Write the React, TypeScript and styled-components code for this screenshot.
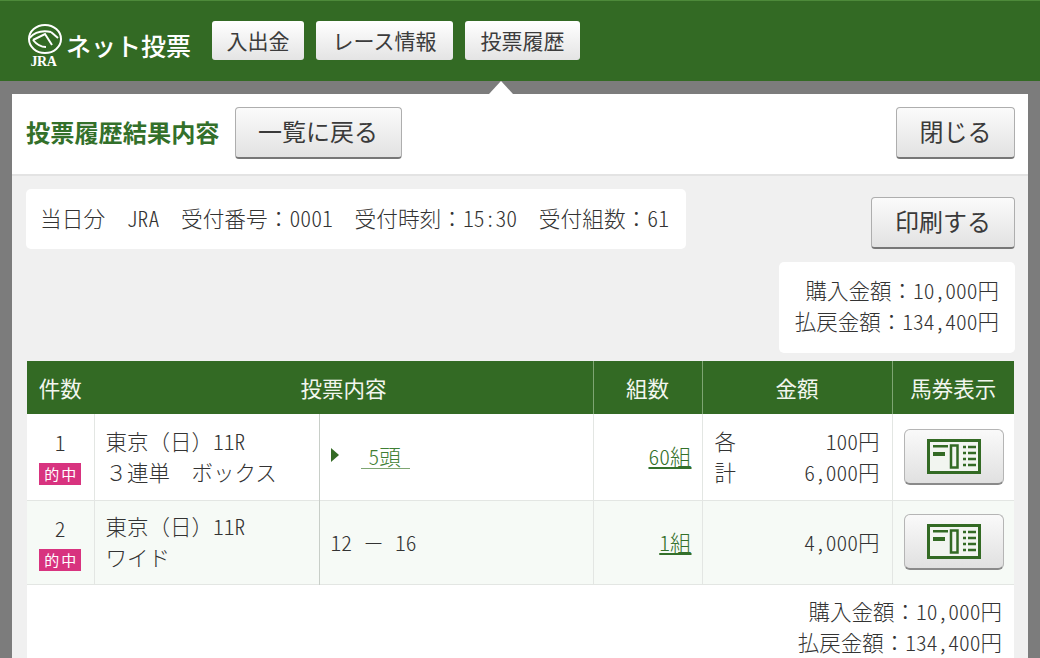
import React from "react";
import styled, { createGlobalStyle } from "styled-components";

const Global = createGlobalStyle`
  html, body { margin: 0; padding: 0; background: #7c7c7c; }
  body { width: 1040px; height: 658px; overflow: hidden; font-family: "Noto Sans CJK JP", "Liberation Sans", sans-serif; font-weight: 300; color: #333; }
  * { box-sizing: border-box; }
`;

const Page = styled.div`
  width: 1040px;
  height: 658px;
  overflow: hidden;
  background: #7c7c7c;
  display: flex;
  flex-direction: column;
`;
const Header = styled.header`
  height: 81px;
  flex: none;
  background: #336a24;
  border-top: 1px solid #4d8a3a;
  display: flex;
  align-items: flex-start;
  padding: 20px 0 0 27px;
`;
const Logo = styled.div`
  width: 163px;
  height: 46px;
  margin-right: 22px;
  display: flex;
  align-items: flex-start;
  color: #fff;
`;
const LogoMark = styled.div`
  width: 36px;
  display: flex;
  flex-direction: column;
  align-items: center;
  margin-top: 3px;
`;
const JraText = styled.span`
  font: bold 14px/11px "Liberation Serif", serif;
  letter-spacing: -0.4px;
  margin-top: 1px;
  margin-left: -3px;
`;
const LogoName = styled.span`
  font-size: 25px;
  font-weight: 500;
  line-height: 30px;
  margin-top: 9px;
  margin-left: 3px;
  white-space: nowrap;
`;
const NavList = styled.nav`
  display: flex;
  gap: 12px;
`;
const NavButton = styled.button`
  height: 39px;
  padding: 0;
  width: ${(p) => p.$w}px;
  font: 400 21px/37px "Noto Sans CJK JP", sans-serif;
  color: #3c3c3c;
  background: linear-gradient(#fff, #e4e4e4);
  border: 0;
  border-radius: 3px;
  white-space: nowrap;
`;
const Stage = styled.div`
  position: relative;
  flex: 1;
  padding: 13px 12px 0;
  min-height: 0;
`;
const Caret = styled.div`
  position: absolute;
  left: 489px;
  top: 0;
  width: 0;
  height: 0;
  border-left: 12px solid transparent;
  border-right: 12px solid transparent;
  border-bottom: 13px solid #fff;
`;
const Panel = styled.main`
  height: 100%;
  background: #f0f0f0;
  display: flex;
  flex-direction: column;
`;
const TitleBar = styled.div`
  height: 82px;
  flex: none;
  background: #fff;
  border-bottom: 2px solid #e3e3e3;
  display: flex;
  align-items: flex-start;
  padding: 13px 13px 0 14px;
`;
const Title = styled.h1`
  margin: 11px 15px 0 0;
  font-size: 24.2px;
  font-weight: 700;
  line-height: 28px;
  color: #33702a;
  white-space: nowrap;
`;
const ActionButton = styled.button`
  height: 52px;
  width: ${(p) => p.$w}px;
  padding: 0 0 4px;
  font: 400 24px/1 "Noto Sans CJK JP", sans-serif;
  color: #3a3a3a;
  background: linear-gradient(#fbfbfb, #e2e2e2);
  border: 1px solid #aeaeae;
  border-bottom: 2px solid #777;
  border-radius: 4px;
  white-space: nowrap;
`;
const Spacer = styled.div`
  flex: 1;
`;
const Info = styled.section`
  height: 185px;
  flex: none;
  display: grid;
  grid-template-columns: 1fr auto;
  padding: 13px 13px 0 14px;
`;
const Receipt = styled.div`
  width: 660px;
  height: 60px;
  background: #fff;
  border-radius: 5px;
  font-size: 21.7px;
  line-height: 58px;
  padding-left: 14px;
  white-space: pre;
`;
const Num = styled.span`
  font-feature-settings: "hwid";
`;
const InfoRight = styled.div`
  display: flex;
  flex-direction: column;
  align-items: flex-end;
  padding-top: 8px;
`;
const SumCard = styled.div`
  margin-top: 13px;
  width: 236px;
  height: 91px;
  background: #fff;
  border-radius: 5px;
  padding: 12px 16px 0 0;
  text-align: right;
  font-size: 21.5px;
  line-height: 31px;
  white-space: nowrap;
`;
const TableWrap = styled.div`
  margin: 0 14px 0 15px;
  background: #fff;
  flex: 1;
  min-height: 0;
`;
const Table = styled.table`
  width: 987px;
  border-collapse: collapse;
  table-layout: fixed;
  font-size: 21.5px;
`;
const Th = styled.th`
  height: 53px;
  padding: 0;
  background: #336a24;
  color: #f2f6ef;
  font-size: 21.5px;
  font-weight: 400;
  border-left: 1px solid ${(p) => (p.$plain ? "#336a24" : "#7ea572")};
  &:first-child { border-left: 0; }
`;
const Row = styled.tr`
  height: ${(p) => p.$h}px;
  background: ${(p) => (p.$alt ? "#f6faf6" : "#fff")};
  border-bottom: 1px solid #e3e6e3;
`;
const Td = styled.td`
  padding: 0 0 2px;
  line-height: 31px;
  border-left: 1px solid ${(p) => (p.$strong ? "#c8cec8" : "#e3e6e3")};
  white-space: pre;
  text-align: ${(p) => p.$align || "left"};
  &:first-child { border-left: 0; }
`;
const CountCell = styled(Td)`
  text-align: center;
  vertical-align: middle;
`;
const Hit = styled.span`
  display: block;
  width: 42px;
  height: 22px;
  margin: 6px auto 0;
  background: #d8337f;
  color: #fff;
  font-size: 15px;
  font-weight: 400;
  line-height: 21px;
  letter-spacing: 2px;
  padding-left: 2px;
  text-align: center;
`;
const RaceCell = styled(Td)`
  padding-left: 11px;
`;
const ContentCell = styled(Td)`
  padding-left: 11px;
`;
const Marker = styled.span`
  display: inline-block;
  width: 0;
  height: 0;
  margin-right: 22px;
  vertical-align: 3px;
  border-left: 8px solid #336a24;
  border-top: 7px solid transparent;
  border-bottom: 7px solid transparent;
`;
const HeadLink = styled.a`
  display: inline-block;
  line-height: 24px;
  padding: 0 9px 0 8px;
  color: #3f7f34;
  border-bottom: 1px solid #7ea572;
`;
const GreenLink = styled.a`
  color: #33702a;
  text-decoration: underline;
  text-underline-offset: 2px;
`;
const GroupCell = styled(Td)`
  text-align: right;
  padding-right: 10px;
`;
const AmountCell = styled(Td)`
  padding-left: 12px;
  padding-right: 12px;
`;
const AmountLine = styled.div`
  display: flex;
  justify-content: ${(p) => (p.$end ? "flex-end" : "space-between")};
`;
const TicketCell = styled(Td)`
  text-align: center;
  padding: 0 0 0 2px;
`;
const TicketButton = styled.button`
  display: inline-flex;
  align-items: center;
  justify-content: center;
  width: 100px;
  height: 56px;
  padding: 0;
  vertical-align: middle;
  background: linear-gradient(#fafafa, #e0e0e0);
  border: 1px solid #b5b5b5;
  border-bottom: 2px solid #8a8a8a;
  border-radius: 6px;
`;
const Totals = styled.div`
  padding: 10px 12px 0 0;
  text-align: right;
  font-size: 21.5px;
  line-height: 31px;
  white-space: nowrap;
`;

const JraMark = () => (
  <svg width="36" height="31" viewBox="0 0 36 31" fill="none" stroke="#fff" strokeWidth="2">
    <ellipse cx="18" cy="15" rx="16" ry="14" />
    <path d="M2.5 14 C7 9 14 6 24 8" />
    <path d="M6 16 L18 10 L25 21" />
    <path d="M6 16 C10 21 14 23 19 23" />
    <path d="M24 8 L31 14" />
  </svg>
);

const TicketIcon = () => (
  <svg width="54" height="35" viewBox="0 0 54 35">
    <rect x="1.5" y="1.5" width="51" height="32" fill="#f2f5f0" stroke="#336a24" strokeWidth="3" />
    <rect x="6" y="6" width="15" height="2.5" fill="#336a24" />
    <rect x="6" y="13" width="12" height="4" fill="#336a24" />
    <rect x="24" y="6.5" width="6.5" height="22" fill="none" stroke="#336a24" strokeWidth="2.5" />
    <path d="M36 8h3M36 14h3M36 20h3M36 26h3M41 8h8M41 14h8M41 20h8M41 26h8" stroke="#336a24" strokeWidth="2.5" />
  </svg>
);

export default function App() {
  return (
    <Page>
      <Global />
      <Header>
        <Logo>
          <LogoMark>
            <JraMark />
            <JraText>JRA</JraText>
          </LogoMark>
          <LogoName>ネット投票</LogoName>
        </Logo>
        <NavList>
          <NavButton $w={92}>入出金</NavButton>
          <NavButton $w={137}>レース情報</NavButton>
          <NavButton $w={115}>投票履歴</NavButton>
        </NavList>
      </Header>
      <Stage>
        <Caret />
        <Panel>
          <TitleBar>
            <Title>投票履歴結果内容</Title>
            <ActionButton $w={167}>一覧に戻る</ActionButton>
            <Spacer />
            <ActionButton $w={119}>閉じる</ActionButton>
          </TitleBar>
          <Info>
            <Receipt>
              当日分　<Num>JRA</Num>　受付番号：<Num>0001</Num>　受付時刻：<Num>15:30</Num>　受付組数：<Num>61</Num>
            </Receipt>
            <InfoRight>
              <ActionButton $w={144}>印刷する</ActionButton>
              <SumCard>
                購入金額：<Num>10,000</Num>円
                <br />
                払戻金額：<Num>134,400</Num>円
              </SumCard>
            </InfoRight>
          </Info>
          <TableWrap>
            <Table>
              <colgroup>
                <col style={{ width: 67 }} />
                <col style={{ width: 225 }} />
                <col style={{ width: 274 }} />
                <col style={{ width: 109 }} />
                <col style={{ width: 190 }} />
                <col style={{ width: 122 }} />
              </colgroup>
              <thead>
                <tr>
                  <Th>件数</Th>
                  <Th colSpan={2} $plain>投票内容</Th>
                  <Th>組数</Th>
                  <Th>金額</Th>
                  <Th>馬券表示</Th>
                </tr>
              </thead>
              <tbody>
                <Row $h={86}>
                  <CountCell>
                    <Num>1</Num>
                    <Hit>的中</Hit>
                  </CountCell>
                  <RaceCell>
                    東京（日）<Num>11R</Num>
                    <br />
                    ３連単　ボックス
                  </RaceCell>
                  <ContentCell $strong>
                    <Marker />
                    <HeadLink>
                      <Num>5</Num>頭
                    </HeadLink>
                  </ContentCell>
                  <GroupCell>
                    <GreenLink>
                      <Num>60</Num>組
                    </GreenLink>
                  </GroupCell>
                  <AmountCell>
                    <AmountLine>
                      <span>各</span>
                      <span>
                        <Num>100</Num>円
                      </span>
                    </AmountLine>
                    <AmountLine>
                      <span>計</span>
                      <span>
                        <Num>6,000</Num>円
                      </span>
                    </AmountLine>
                  </AmountCell>
                  <TicketCell>
                    <TicketButton aria-label="馬券表示">
                      <TicketIcon />
                    </TicketButton>
                  </TicketCell>
                </Row>
                <Row $h={84} $alt>
                  <CountCell>
                    <Num>2</Num>
                    <Hit>的中</Hit>
                  </CountCell>
                  <RaceCell>
                    東京（日）<Num>11R</Num>
                    <br />
                    ワイド
                  </RaceCell>
                  <ContentCell $strong>
                    <Num>{"12 "}</Num>－<Num>{" 16"}</Num>
                  </ContentCell>
                  <GroupCell>
                    <GreenLink>
                      <Num>1</Num>組
                    </GreenLink>
                  </GroupCell>
                  <AmountCell>
                    <AmountLine $end>
                      <span>
                        <Num>4,000</Num>円
                      </span>
                    </AmountLine>
                  </AmountCell>
                  <TicketCell>
                    <TicketButton aria-label="馬券表示">
                      <TicketIcon />
                    </TicketButton>
                  </TicketCell>
                </Row>
              </tbody>
            </Table>
            <Totals>
              購入金額：<Num>10,000</Num>円
              <br />
              払戻金額：<Num>134,400</Num>円
            </Totals>
          </TableWrap>
        </Panel>
      </Stage>
    </Page>
  );
}
